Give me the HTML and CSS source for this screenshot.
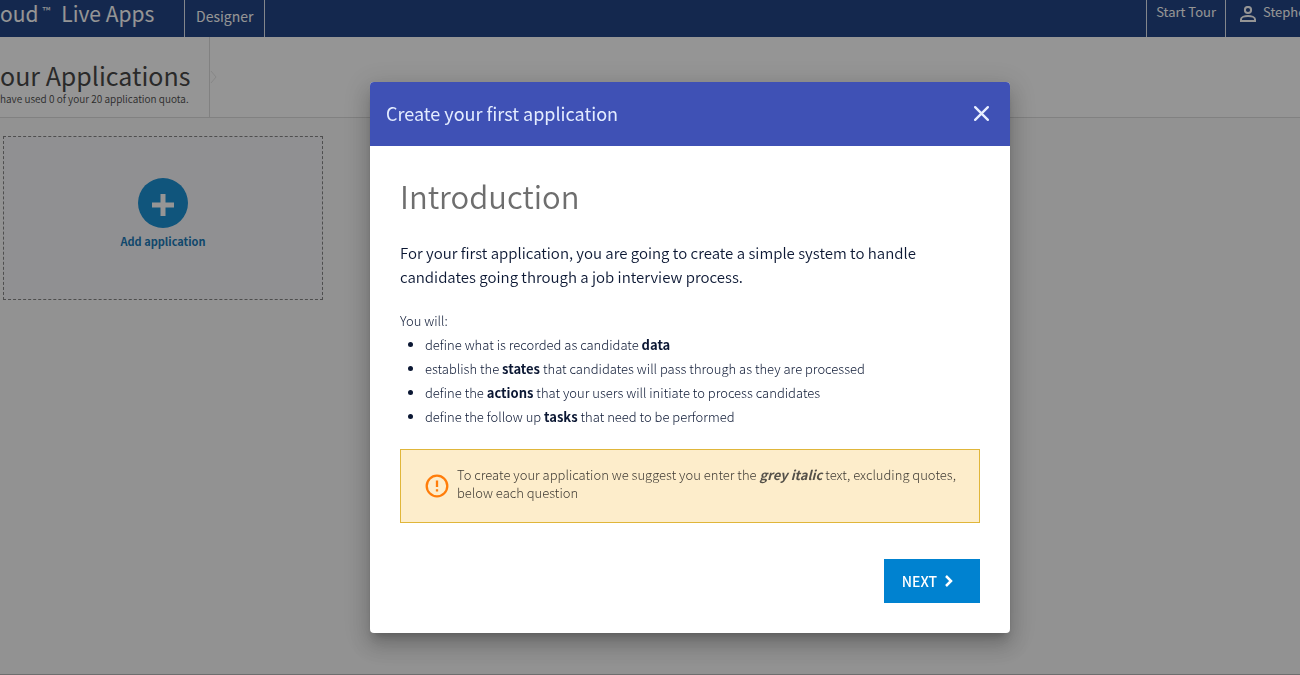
FILE: index.html
```html
<!DOCTYPE html>
<html lang="en">
<head>
<meta charset="utf-8">
<title>Live Apps</title>
<link rel="stylesheet" href="styles.css">
</head>
<body>
<div class="shell">
  <header class="topbar">
    <div class="brand"><span>oud</span><span class="tm">™</span><span class="product">Live Apps</span></div>
    <a class="nav-link designer" href="#designer">Designer</a>
    <div class="topbar-end">
      <a class="nav-link tour" href="#tour">Start Tour</a>
      <a class="nav-link user" href="#account">
        <svg class="user-icon" viewBox="0 0 16 16" aria-hidden="true"><circle cx="8" cy="4" r="3.1"/><path d="M1 15v-1.800C1 11.200 4.500 10 8 10s7 1.200 7 3.200V15z"/></svg>
        <span>Stephe</span>
      </a>
    </div>
  </header>
  <section class="subheader">
    <div class="page-title">
      <h1>our Applications</h1>
      <p>have used 0 of your 20 application quota.</p>
    </div>
    <svg class="crumb-arrow" viewBox="0 0 8 14" aria-hidden="true"><path d="M1 1l5 6-5 6"/></svg>
  </section>
  <main class="content">
    <button class="add-card" type="button">
      <span class="add-circle"><svg viewBox="0 0 22 22" aria-hidden="true"><path d="M8.500 0h5v8.500H22v5h-8.500V22h-5v-8.500H0v-5h8.500z"/></svg></span>
      <span class="add-label">Add application</span>
    </button>
  </main>
</div>

<div class="backdrop">
  <div class="dialog" role="dialog" aria-modal="true" aria-labelledby="dialog-title">
    <div class="dialog-head">
      <h2 id="dialog-title">Create your first application</h2>
      <button class="close" type="button" aria-label="Close"><svg viewBox="0 0 16 16" aria-hidden="true"><path d="M2 2l12 12M14 2L2 14"/></svg></button>
    </div>
    <div class="dialog-body">
      <h3>Introduction</h3>
      <p class="lead">For your first application, you are going to create a simple system to handle candidates going through a job interview process.</p>
      <p class="list-intro">You will:</p>
      <ul class="steps">
        <li>define what is recorded as candidate <b>data</b></li>
        <li>establish the <b>states</b> that candidates will pass through as they are processed</li>
        <li>define the <b>actions</b> that your users will initiate to process candidates</li>
        <li>define the follow up <b>tasks</b> that need to be performed</li>
      </ul>
      <div class="notice">
        <svg class="notice-icon" viewBox="0 0 24 24" aria-hidden="true"><circle cx="12" cy="12" r="10.300"/><path d="M12 6.500v6.500M12 15.200v2.300"/></svg>
        <p>To create your application we suggest you enter the <b><i>grey italic</i></b> text, excluding quotes, below each question</p>
      </div>
      <div class="actions">
        <button class="next" type="button"><span>NEXT</span><svg viewBox="0 0 10 14" aria-hidden="true"><path d="M1 2l5 5-5 5"/></svg></button>
      </div>
    </div>
  </div>
</div>
</body>
</html>
```
FILE: styles.css
```css
* { box-sizing: border-box; }
body {
  margin: 0;
  font-family: "Noto Sans CJK SC", "Noto Sans", sans-serif;
  font-size: 13px;
  color: #0b1733;
}
h1, h2, h3, p, ul { margin: 0; padding: 0; font-weight: 400; }
button { font: inherit; border: 0; padding: 0; cursor: pointer; }
a { color: inherit; text-decoration: none; }
svg { display: block; flex: none; }

.shell {
  min-height: 100vh;
  display: flex;
  flex-direction: column;
  background: #f9f9f9;
  border-bottom: 1px solid #b4b4b4;
}
.topbar {
  display: flex;
  height: 37px;
  background: #092f77;
  color: #fff;
}
.brand {
  display: flex;
  width: 184px;
  font-size: 21px;
  line-height: 26px;
  white-space: nowrap;
}
.tm { font-size: 11px; line-height: 20px; margin-left: 4px; }
.product { margin-left: 11px; }
.nav-link { display: block; border-left: 1px solid #dde3ee; white-space: nowrap; }
.designer {
  padding: 0 11px;
  border-right: 1px solid #dde3ee;
  font-size: 14px;
  line-height: 32px;
}
.topbar-end { display: flex; margin-left: auto; line-height: 24px; }
.tour { padding: 0 9px; }
.user { display: flex; gap: 7px; width: 75px; padding-left: 14px; overflow: hidden; }
.user-icon { width: 16px; height: 16px; margin-top: 6px; fill: none; stroke: #fff; stroke-width: 2; }

.subheader {
  display: flex;
  align-items: center;
  height: 81px;
  background: #fff;
  border-bottom: 1px solid #d8d8d8;
}
.page-title {
  align-self: stretch;
  display: flex;
  flex-direction: column;
  width: 210px;
  padding-top: 22px;
  border-right: 1px solid #d8d8d8;
  color: #333;
  white-space: nowrap;
}
.page-title h1 { font-size: 25px; line-height: 32px; }
.page-title p { font-size: 10px; line-height: 16px; font-weight: 350; }
.crumb-arrow { width: 8px; height: 14px; fill: none; stroke: #e4e4e4; }

.content { padding: 18px 3px; }
.add-card {
  display: flex;
  flex-direction: column;
  align-items: center;
  gap: 3px;
  width: 320px;
  height: 164px;
  padding-top: 41px;
  background: #f6f6f9;
  border: 1px dashed #777;
  color: #006bb0;
}
.add-circle {
  display: grid;
  place-items: center;
  width: 50px;
  height: 50px;
  padding-top: 3px;
  border-radius: 50%;
  background: #0084cf;
}
.add-circle svg { width: 22px; height: 22px; fill: #fff; }
.add-label { font-size: 11px; line-height: 20px; font-weight: 700; }

.backdrop {
  position: fixed;
  inset: 0;
  display: flex;
  align-items: center;
  justify-content: center;
  padding: 40px 0 0 80px;
  background: rgba(33, 33, 33, 0.48);
}
.dialog {
  width: 640px;
  max-width: 90%;
  background: #fff;
  border-radius: 4px;
  overflow: hidden;
  box-shadow: 0 7px 8px -4px rgba(0, 0, 0, 0.2), 0 13px 19px 2px rgba(0, 0, 0, 0.14), 0 5px 24px 4px rgba(0, 0, 0, 0.12);
}
.dialog-head {
  display: flex;
  align-items: center;
  justify-content: space-between;
  height: 64px;
  padding: 0 20px 2px 16px;
  background: #3f51b5;
  color: #e3ecff;
}
.dialog-head h2 { font-size: 18px; line-height: 24px; }
.close { background: none; }
.close svg { width: 17px; height: 17px; fill: none; stroke: #e8efff; stroke-width: 2.200; stroke-linecap: round; }

.dialog-body { padding: 31px 30px 30px; }
.dialog-body h3 { font-size: 31px; line-height: 38px; font-weight: 350; color: #6e6e6e; }
.lead { margin-top: 26px; font-size: 15px; line-height: 24px; font-weight: 350; }
.list-intro { margin-top: 20px; line-height: 24px; font-weight: 300; }
.steps { padding-left: 25px; line-height: 24px; font-weight: 300; }
.steps b { font-weight: 700; }
.notice {
  display: flex;
  align-items: center;
  gap: 8px;
  margin-top: 20px;
  padding: 16px 20px 16px 24px;
  background: #fdedcb;
  border: 1px solid #e0b63a;
  color: #3f3b34;
}
.notice p { padding-bottom: 4px; line-height: 18px; font-weight: 300; }
.notice b { font-weight: 700; color: #555149; }
.notice-icon { width: 24px; height: 24px; fill: none; stroke: #ff7d0a; stroke-width: 2.300; }
.actions { display: flex; justify-content: flex-end; margin-top: 36px; }
.next {
  display: flex;
  align-items: center;
  gap: 8px;
  height: 44px;
  padding: 0 25px 0 18px;
  background: #0082d0;
  color: #fff;
  font-size: 14px;
  font-weight: 500;
}
.next svg { width: 10px; height: 14px; fill: none; stroke: #fff; stroke-width: 2.500; }
```
